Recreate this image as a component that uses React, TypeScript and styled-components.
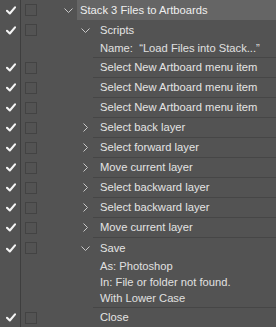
import React from "react";
import styled, { createGlobalStyle } from "styled-components";

const Global = createGlobalStyle`
  html, body { margin: 0; padding: 0; background: #535353; }
  body { font-family: "Liberation Sans", Arial, sans-serif; }
`;

const Panel = styled.div`
  width: 276px;
  height: 327px;
  overflow: hidden;
  background: #535353;
  color: #e2e2e2;
  font-size: 11.2px;
`;

const Block = styled.div`
  display: grid;
  grid-template-columns: 21px 22px 1fr;
  align-items: start;
`;

const CheckCell = styled.div<{ $h: number }>`
  align-self: stretch;
  border-right: 1px solid #3e3e3e;
  display: flex;
  justify-content: center;
  padding-top: ${(p) => (p.$h - 9) / 2}px;
  box-sizing: border-box;
  padding-left: 1px;
`;

const BoxCell = styled.div<{ $h: number }>`
  height: ${(p) => p.$h}px;
  display: flex;
  align-items: center;
  padding-left: 4px;
`;

const Box = styled.div`
  width: 12px;
  height: 12px;
  box-sizing: border-box;
  border: 1px solid #434343;
`;

const Content = styled.div<{ $indent: number }>`
  display: grid;
  grid-template-columns: ${(p) => p.$indent}px 1fr;
`;

const ChevronSlot = styled.div<{ $h: number; $pr: number }>`
  height: ${(p) => p.$h}px;
  display: flex;
  align-items: center;
  justify-content: flex-end;
  padding-right: ${(p) => p.$pr}px;
  color: #c9c9c9;
`;

const Body = styled.div<{ $header?: boolean; $rule?: boolean; $pad: number }>`
  background: ${(p) => (p.$header ? "#656565" : "transparent")};
  border-bottom: ${(p) => (p.$rule ? "1px solid #464646" : "none")};
  padding-left: ${(p) => (p.$header ? 3 : 7)}px;
  padding-bottom: ${(p) => p.$pad}px;
`;

const MainLine = styled.div<{ $h: number; $header?: boolean }>`
  height: ${(p) => p.$h}px;
  line-height: ${(p) => p.$h}px;
  white-space: nowrap;
  color: ${(p) => (p.$header ? "#efefef" : "#e4e4e4")};
`;

const DetailLine = styled.div`
  height: 16px;
  line-height: 16px;
  white-space: pre;
  color: #e0e0e0;
`;

const Check = () => (
  <svg width="10" height="9" viewBox="0 0 10 9">
    <path d="M1 4.8 L3.8 7.5 L9 1.3" fill="none" stroke="#f4f4f4" strokeWidth="2.1" strokeLinecap="round" strokeLinejoin="round" />
  </svg>
);

const ChevDown = () => (
  <svg width="9" height="5" viewBox="0 0 9 5">
    <path d="M0.5 0.5 L4.5 4.5 L8.5 0.5" fill="none" stroke="currentColor" strokeWidth="1" />
  </svg>
);

const ChevRight = () => (
  <svg width="5" height="9" viewBox="0 0 5 9">
    <path d="M0.5 0.5 L4.5 4.5 L0.5 8.5" fill="none" stroke="currentColor" strokeWidth="1" />
  </svg>
);

type ItemProps = {
  text: string;
  level: 0 | 1;
  chevron?: "down" | "right";
  details?: string[];
};

const Item: React.FC<ItemProps> = ({ text, level, chevron, details }) => {
  const header = level === 0;
  const h = header ? 20 : details ? 20 : 19;
  return (
    <Block>
      <CheckCell $h={h}>
        <Check />
      </CheckCell>
      <BoxCell $h={h}>
        <Box />
      </BoxCell>
      <Content $indent={header ? 34 : 50}>
        <ChevronSlot $h={h} $pr={header ? 4 : chevron === "right" ? 5 : 3}>
          {chevron === "down" ? <ChevDown /> : chevron === "right" ? <ChevRight /> : null}
        </ChevronSlot>
        <Body $header={header} $rule={!header} $pad={details ? 1 : 0}>
          <MainLine $h={h} $header={header}>{text}</MainLine>
          {details?.map((d) => (
            <DetailLine key={d}>{d}</DetailLine>
          ))}
        </Body>
      </Content>
    </Block>
  );
};

const items: ItemProps[] = [
  { text: "Stack 3 Files to Artboards", level: 0, chevron: "down" },
  { text: "Scripts", level: 1, chevron: "down", details: ["Name:  \u201CLoad Files into Stack...\u201D"] },
  { text: "Select New Artboard menu item", level: 1 },
  { text: "Select New Artboard menu item", level: 1 },
  { text: "Select New Artboard menu item", level: 1 },
  { text: "Select back layer", level: 1, chevron: "right" },
  { text: "Select forward layer", level: 1, chevron: "right" },
  { text: "Move current layer", level: 1, chevron: "right" },
  { text: "Select backward layer", level: 1, chevron: "right" },
  { text: "Select backward layer", level: 1, chevron: "right" },
  { text: "Move current layer", level: 1, chevron: "right" },
  {
    text: "Save",
    level: 1,
    chevron: "down",
    details: ["As: Photoshop", "In: File or folder not found.", "With Lower Case"],
  },
  { text: "Close", level: 1 },
];

export default function App() {
  return (
    <>
      <Global />
      <Panel>
        {items.map((it, i) => (
          <Item key={i} {...it} />
        ))}
      </Panel>
    </>
  );
}
